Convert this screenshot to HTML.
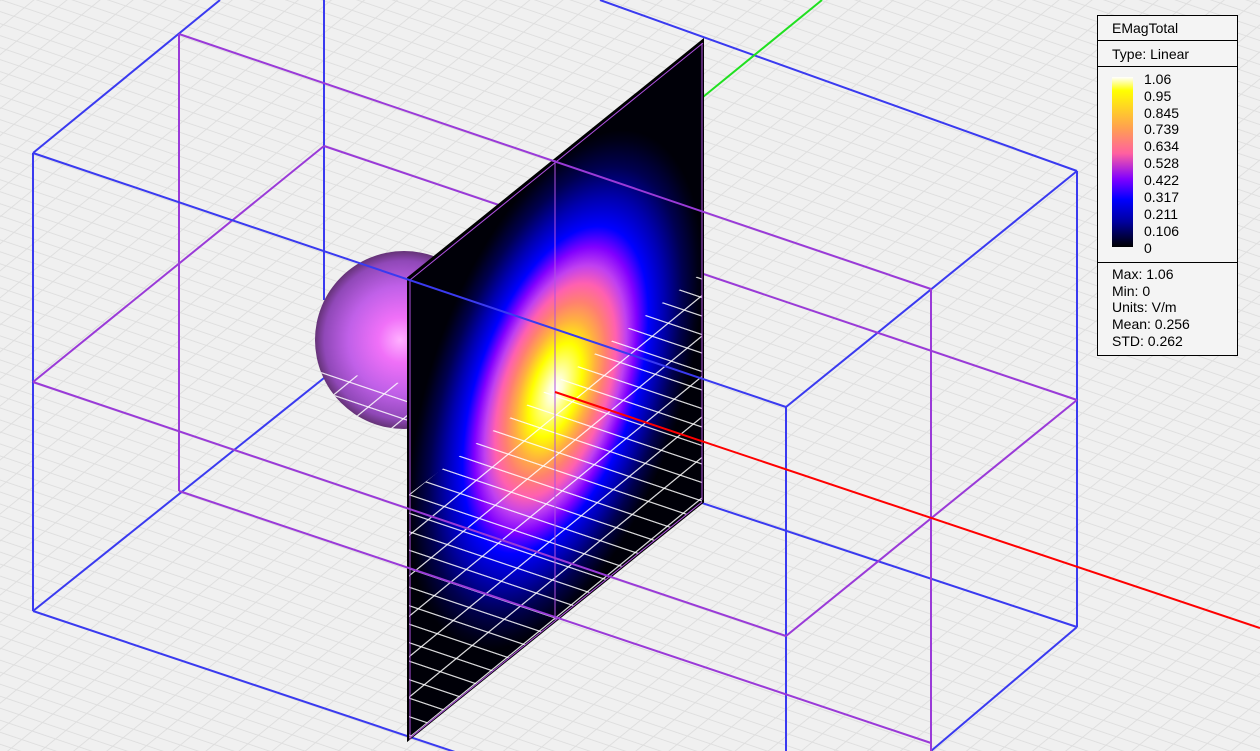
<!DOCTYPE html>
<html><head><meta charset="utf-8"><style>
html,body{margin:0;padding:0;background:#f0f0f0;overflow:hidden}
svg{display:block}
text{font-family:"Liberation Sans",Arial,sans-serif;font-size:14px;fill:#000}
</style></head><body>
<svg width="1260" height="751" viewBox="0 0 1260 751" xmlns="http://www.w3.org/2000/svg">
<defs>
<pattern id="grid" patternUnits="userSpaceOnUse" width="1" height="1" patternTransform="matrix(23.4,7.9,10.4,-8.5,0,0)">
<rect x="0" y="0" width="1" height="0.08" fill="#dedede"/>
<rect x="0" y="0" width="0.045" height="1" fill="#dedede"/>
</pattern>
<pattern id="wgrid" patternUnits="userSpaceOnUse" width="1" height="1" patternTransform="matrix(35,11.8,16,-13.1,408,495)">
<rect x="0" y="0" width="1" height="0.07" fill="#ffffff" opacity="0.85"/>
<rect x="0" y="0" width="0.04" height="1" fill="#ffffff" opacity="0.85"/>
</pattern>
<radialGradient id="heat" cx="0.5" cy="0.5" r="0.5" gradientUnits="objectBoundingBox">
<stop offset="0" stop-color="#ffffff"/>
<stop offset="0.05" stop-color="#ffffd0"/>
<stop offset="0.18" stop-color="#ffff00"/>
<stop offset="0.27" stop-color="#ffb040"/>
<stop offset="0.34" stop-color="#ff8070"/>
<stop offset="0.41" stop-color="#ff60b0"/>
<stop offset="0.48" stop-color="#c040f0"/>
<stop offset="0.55" stop-color="#8000ff"/>
<stop offset="0.63" stop-color="#0000ff"/>
<stop offset="0.74" stop-color="#0000b0"/>
<stop offset="0.86" stop-color="#000050"/>
<stop offset="0.96" stop-color="#000018"/>
<stop offset="1" stop-color="#000008"/>
</radialGradient>
<radialGradient id="sph" cx="404" cy="340" r="90" fx="400" fy="340" gradientUnits="userSpaceOnUse">
<stop offset="0" stop-color="#ffb0ff"/>
<stop offset="0.25" stop-color="#f070f8"/>
<stop offset="0.6" stop-color="#c060e8"/>
<stop offset="0.88" stop-color="#9048b8"/>
<stop offset="1" stop-color="#603070"/>
</radialGradient>
<linearGradient id="cbar" x1="0" y1="0" x2="0" y2="1">
<stop offset="0" stop-color="#ffffff"/>
<stop offset="0.08" stop-color="#ffff00"/>
<stop offset="0.3" stop-color="#ffa050"/>
<stop offset="0.45" stop-color="#ff60a0"/>
<stop offset="0.6" stop-color="#8000ff"/>
<stop offset="0.72" stop-color="#0000ff"/>
<stop offset="0.85" stop-color="#0000a0"/>
<stop offset="1" stop-color="#000000"/>
</linearGradient>
<clipPath id="pclip"><polygon points="408,495 703,272 703,502 408,740"/></clipPath>
<clipPath id="sclip"><circle cx="404" cy="340" r="89"/></clipPath>
</defs>
<rect width="1260" height="751" fill="#f0f0f0"/>
<rect width="1260" height="751" fill="url(#grid)"/>

<g stroke-width="2" fill="none">
<line x1="33" y1="153" x2="220" y2="0" stroke="#3a3af0"/>
<line x1="324" y1="0" x2="324" y2="300" stroke="#3a3af0"/>
<line x1="33" y1="611" x2="324" y2="378" stroke="#3a3af0"/>
<line x1="324" y1="378" x2="1077" y2="627" stroke="#3a3af0"/>
<line x1="600" y1="0" x2="1077" y2="171" stroke="#3a3af0"/>
<line x1="33" y1="153" x2="33" y2="611" stroke="#3a3af0"/>
<line x1="33" y1="611" x2="470" y2="757" stroke="#3a3af0"/>
<line x1="786" y1="407" x2="1077" y2="171" stroke="#3a3af0"/>
<line x1="1077" y1="171" x2="1077" y2="627" stroke="#3a3af0"/>
<line x1="1077" y1="627" x2="931" y2="751" stroke="#3a3af0"/>
<line x1="786" y1="407" x2="786" y2="751" stroke="#3a3af0"/>
<line x1="179" y1="34" x2="179" y2="491" stroke="#9a3ad8"/>
<line x1="33" y1="382" x2="324" y2="146" stroke="#9a3ad8"/>
<line x1="324" y1="146" x2="1077" y2="400" stroke="#9a3ad8"/>
<line x1="786" y1="636" x2="1077" y2="400" stroke="#9a3ad8"/>
<line x1="931" y1="289" x2="931" y2="751" stroke="#9a3ad8"/>
<line x1="703" y1="97" x2="822" y2="0" stroke="#20e020"/>
</g>

<circle cx="404" cy="340" r="89" fill="url(#sph)"/>
<g clip-path="url(#sclip)"><polygon points="300,365 410,385 410,440 300,440" fill="url(#wgrid)"/></g>

<rect x="0" y="0" width="1" height="1" transform="matrix(295,-238,0,462,408,278)" fill="url(#heat)"/>
<g clip-path="url(#pclip)"><rect x="400" y="260" width="310" height="490" fill="url(#wgrid)"/></g>
<polygon points="408,278 703,40 703,502 408,740" fill="none" stroke="#000" stroke-width="2"/>
<line x1="410" y1="281" x2="410" y2="740" stroke="#b050e0" stroke-width="1"/>
<line x1="410" y1="280" x2="703" y2="43" stroke="#b050e0" stroke-width="1"/>
<line x1="702" y1="43" x2="702" y2="500" stroke="#b050e0" stroke-width="1"/>
<line x1="410" y1="738" x2="702" y2="502" stroke="#b050e0" stroke-width="1"/>
<line x1="555" y1="160" x2="555" y2="620" stroke="#b050e0" stroke-width="1"/>

<g stroke-width="2" fill="none">
<line x1="179" y1="34" x2="931" y2="289" stroke="#9a3ad8"/>
<line x1="33" y1="382" x2="786" y2="636" stroke="#9a3ad8"/>
<line x1="179" y1="491" x2="931" y2="743" stroke="#9a3ad8"/>
<line x1="33" y1="153" x2="786" y2="407" stroke="#3a3af0"/>
<line x1="555" y1="392" x2="1260" y2="628" stroke="#ff0000"/>
</g>

<rect x="1097.5" y="15.5" width="140" height="340" fill="#f4f4f4" stroke="#000" stroke-width="1"/>
<line x1="1097" y1="40.5" x2="1238" y2="40.5" stroke="#000"/>
<line x1="1097" y1="66.5" x2="1238" y2="66.5" stroke="#000"/>
<line x1="1097" y1="262.5" x2="1238" y2="262.5" stroke="#000"/>
<text x="1112" y="33">EMagTotal</text>
<text x="1112" y="59">Type: Linear</text>
<rect x="1112" y="77" width="21" height="170" fill="url(#cbar)"/>
<g>
<text x="1144" y="84">1.06</text>
<text x="1144" y="101">0.95</text>
<text x="1144" y="118">0.845</text>
<text x="1144" y="134">0.739</text>
<text x="1144" y="151">0.634</text>
<text x="1144" y="168">0.528</text>
<text x="1144" y="185">0.422</text>
<text x="1144" y="202">0.317</text>
<text x="1144" y="219">0.211</text>
<text x="1144" y="236">0.106</text>
<text x="1144" y="253">0</text>
</g>
<text x="1112" y="279">Max: 1.06</text>
<text x="1112" y="296">Min: 0</text>
<text x="1112" y="312">Units: V/m</text>
<text x="1112" y="329">Mean: 0.256</text>
<text x="1112" y="346">STD: 0.262</text>
</svg>
</body></html>
